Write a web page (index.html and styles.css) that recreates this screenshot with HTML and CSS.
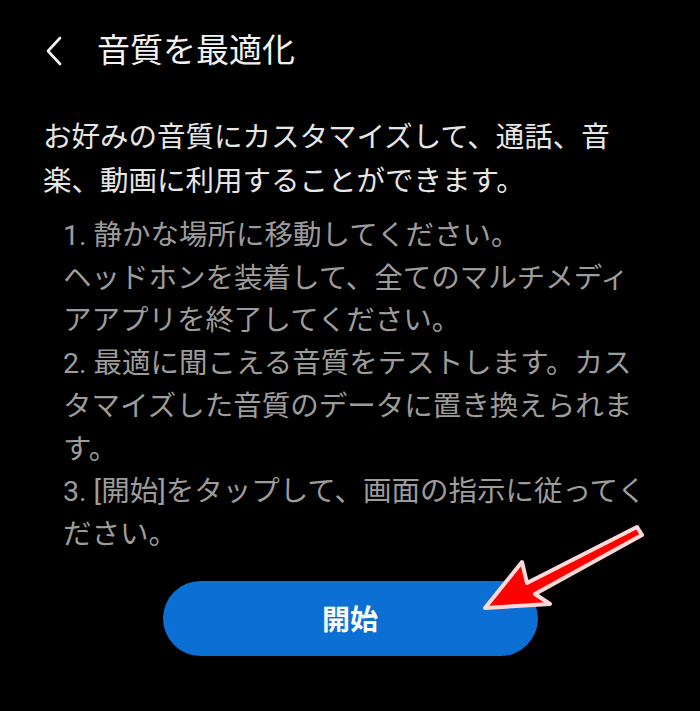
FILE: index.html
```html
<!DOCTYPE html>
<html lang="ja">
<head>
<meta charset="utf-8">
<title>音質を最適化</title>
<link rel="stylesheet" href="styles.css">
</head>
<body>
<div class="screen">
  <header class="topbar">
    <button class="back" aria-label="戻る">
      <svg width="18" height="30" viewBox="0 0 18 30"><polyline points="15,2 3,15 15,28" fill="none" stroke="#f2f2f2" stroke-width="2.6" stroke-linecap="round" stroke-linejoin="round"/></svg>
    </button>
    <h1 class="title">音質を最適化</h1>
  </header>
  <main class="content">
    <p class="intro">お好みの音質にカスタマイズして、通話、音楽、動画に利用することができます。</p>
    <div class="steps">
      <p>1. 静かな場所に移動してください。<br>ヘッドホンを装着して、全てのマルチメディアアプリを終了してください。</p>
      <p>2. 最適に聞こえる音質をテストします。カスタマイズした音質のデータに置き換えられます。</p>
      <p>3. [開始]をタップして、画面の指示に従ってください。</p>
    </div>
    <div class="actions">
      <button class="start">開始</button>
    </div>
  </main>
  <svg class="annotation" width="700" height="711" viewBox="0 0 700 711">
    <polygon points="485,608 522,562 527,583 637,527 642,535 535,594 550,604" fill="#ff0000" stroke="#ffd9d9" stroke-width="4" stroke-linejoin="round"/>
  </svg>
</div>
</body>
</html>
```
FILE: styles.css
```css
html, body {
  margin: 0;
  padding: 0;
  background: #000;
}
.screen {
  position: relative;
  width: 700px;
  height: 711px;
  overflow: hidden;
  background: #000;
  font-family: Roboto, "Noto Sans CJK JP", sans-serif;
}
.topbar {
  height: 102px;
  display: flex;
  align-items: center;
  padding-left: 45px;
  box-sizing: border-box;
}
.back {
  background: none;
  border: 0;
  padding: 0;
  width: 18px;
  height: 30px;
  display: flex;
  margin-right: 34px;
}
.title {
  margin: 0;
  font-size: 33px;
  font-weight: 400;
  line-height: 40px;
  color: #f2f2f2;
}
.content {
  padding: 14px 45px 0 43px;
}
.intro {
  margin: 0;
  width: 586px;
  font-size: 28.5px;
  line-height: 44px;
  color: #e6e6e6;
}
.steps {
  margin-top: 11px;
  padding-left: 20px;
  font-size: 28.5px;
  line-height: 42.7px;
  color: #9c9c9c;
}
.steps p {
  margin: 0;
}
.actions {
  margin-top: 24px;
  display: flex;
  justify-content: center;
  margin-left: -43px;
  margin-right: -45px;
}
.start {
  width: 375px;
  height: 75px;
  border: 0;
  border-radius: 38px;
  background: #0c6fd3;
  color: #fff;
  font-family: Roboto, "Noto Sans CJK JP", sans-serif;
  font-size: 28px;
  font-weight: 700;
}
.annotation {
  position: absolute;
  left: 0;
  top: 0;
  pointer-events: none;
}
```
